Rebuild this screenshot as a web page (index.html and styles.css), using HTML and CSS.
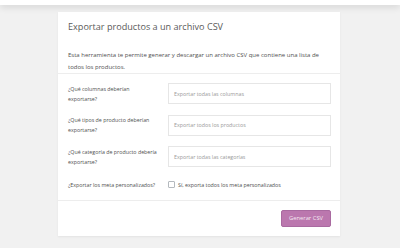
FILE: index.html
```html
<!DOCTYPE html>
<html lang="es">
<head>
  <meta charset="UTF-8" />
  <title>Exportar productos</title>
  <link rel="stylesheet" href="styles.css">
</head>
<body>
  <div class="topbar"></div>
  <main class="wrap">
    <div class="card">
      <header class="card-head">
        <h2>Exportar productos a un archivo CSV</h2>
        <p>Esta herramienta te permite generar y descargar un archivo CSV que contiene una lista de todos los productos.</p>
      </header>
      <section class="card-body">
        <div class="field-row">
          <label>¿Qué columnas deberían exportarse?</label>
          <div class="select">Exportar todas las columnas</div>
        </div>
        <div class="field-row">
          <label>¿Qué tipos de producto deberían exportarse?</label>
          <div class="select">Exportar todos los productos</div>
        </div>
        <div class="field-row">
          <label>¿Qué categoría de producto debería exportarse?</label>
          <div class="select">Exportar todas las categorías</div>
        </div>
        <div class="field-row check-row">
          <label>¿Exportar los meta personalizados?</label>
          <label class="check"><span class="box"></span>Sí, exporta todos los meta personalizados</label>
        </div>
      </section>
      <footer class="card-foot">
        <button>Generar CSV</button>
      </footer>
    </div>
  </main>
</body>
</html>
```

FILE: styles.css
```css
:root {
  --bg: #f1f1f1;
  --panel: #ffffff;
  --text: #4f4f4f;
  --muted: #999;
  --line: #ededed;
  --primary: #bb77ae;
}
* { box-sizing: border-box; margin: 0; padding: 0; }
body {
  font-family: 'Open Sans', sans-serif;
  background: var(--bg);
  color: var(--text);
  width: 400px;
  height: 248px;
  overflow: hidden;
}
.topbar {
  height: 5px;
  background: var(--panel);
  box-shadow: 0 2px 7px rgba(0, 0, 0, 0.14);
}
.wrap { padding: 7px 0 0 58px; }
.card {
  width: 282px;
  background: var(--panel);
  box-shadow: 0 1px 2px rgba(0, 0, 0, 0.06);
}
.card-head {
  padding: 8px 9px 0 10px;
  border-bottom: 1px solid var(--line);
}
.card-head h2 {
  font-size: 9.1px;
  font-weight: 400;
  line-height: 14px;
  color: #5a5a5a;
  margin-bottom: 15px;
}
.card-head p {
  font-size: 6px;
  line-height: 12px;
}
.card-body {
  padding: 9px 9px 8px 10px;
  display: flex;
  flex-direction: column;
  gap: 10.5px;
  border-bottom: 1px solid var(--line);
}
.field-row {
  display: grid;
  grid-template-columns: 100px 1fr;
  align-items: center;
}
.field-row > label:first-child {
  font-size: 5.3px;
  line-height: 10px;
  padding-right: 11px;
}
.select {
  height: 21px;
  border: 1px solid #e6e6e6;
  padding: 0 5px;
  display: flex;
  align-items: center;
  font-size: 5.3px;
  color: var(--muted);
}
.check-row { height: 14px; }
.check {
  display: flex;
  align-items: center;
  gap: 3px;
  font-size: 5.3px;
}
.box {
  width: 7px;
  height: 7px;
  border: 1px solid #b4b9be;
  border-radius: 1px;
  background: #fff;
}
.card-foot {
  padding: 9px 9px 9px 10px;
  display: flex;
  justify-content: flex-end;
}
button {
  width: 50px;
  height: 17px;
  background: var(--primary);
  border: 1px solid #a96aa0;
  border-radius: 2px;
  color: #f5e9f3;
  font-family: 'Open Sans', sans-serif;
  font-size: 5.8px;
}
```
